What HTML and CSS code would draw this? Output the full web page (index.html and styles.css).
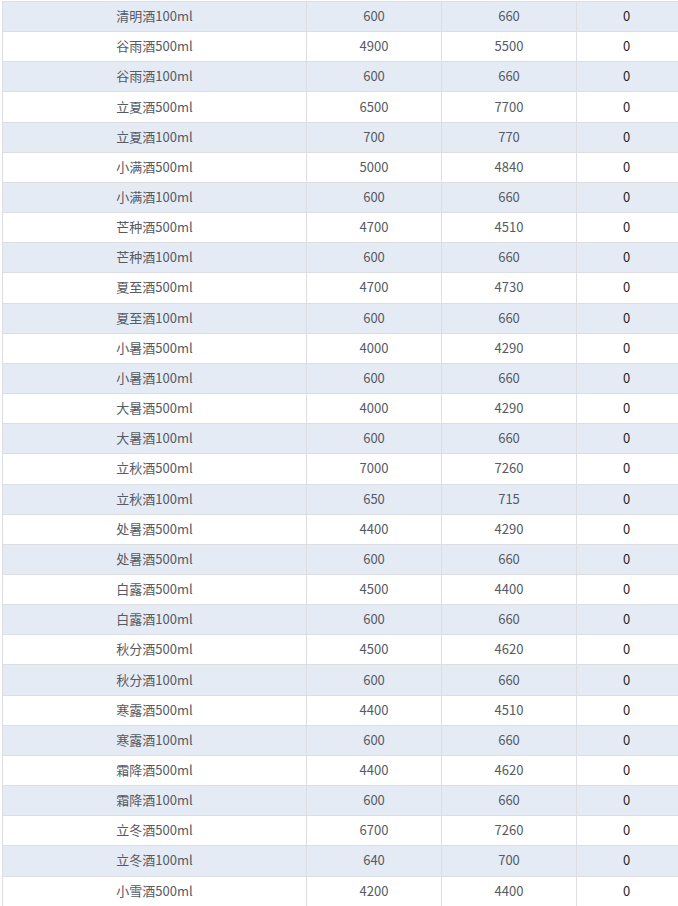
FILE: index.html
```html
<!DOCTYPE html>
<html lang="zh">
<head>
<meta charset="utf-8">
<link rel="stylesheet" href="styles.css">
</head>
<body>
<div class="frame">
<table class="grid">
<tbody>
<tr class="alt"><td class="name">清明酒100ml</td><td>600</td><td>660</td><td class="zero">0</td></tr>
<tr><td class="name">谷雨酒500ml</td><td>4900</td><td>5500</td><td class="zero">0</td></tr>
<tr class="alt"><td class="name">谷雨酒100ml</td><td>600</td><td>660</td><td class="zero">0</td></tr>
<tr><td class="name">立夏酒500ml</td><td>6500</td><td>7700</td><td class="zero">0</td></tr>
<tr class="alt"><td class="name">立夏酒100ml</td><td>700</td><td>770</td><td class="zero">0</td></tr>
<tr><td class="name">小满酒500ml</td><td>5000</td><td>4840</td><td class="zero">0</td></tr>
<tr class="alt"><td class="name">小满酒100ml</td><td>600</td><td>660</td><td class="zero">0</td></tr>
<tr><td class="name">芒种酒500ml</td><td>4700</td><td>4510</td><td class="zero">0</td></tr>
<tr class="alt"><td class="name">芒种酒100ml</td><td>600</td><td>660</td><td class="zero">0</td></tr>
<tr><td class="name">夏至酒500ml</td><td>4700</td><td>4730</td><td class="zero">0</td></tr>
<tr class="alt"><td class="name">夏至酒100ml</td><td>600</td><td>660</td><td class="zero">0</td></tr>
<tr><td class="name">小暑酒500ml</td><td>4000</td><td>4290</td><td class="zero">0</td></tr>
<tr class="alt"><td class="name">小暑酒100ml</td><td>600</td><td>660</td><td class="zero">0</td></tr>
<tr><td class="name">大暑酒500ml</td><td>4000</td><td>4290</td><td class="zero">0</td></tr>
<tr class="alt"><td class="name">大暑酒100ml</td><td>600</td><td>660</td><td class="zero">0</td></tr>
<tr><td class="name">立秋酒500ml</td><td>7000</td><td>7260</td><td class="zero">0</td></tr>
<tr class="alt"><td class="name">立秋酒100ml</td><td>650</td><td>715</td><td class="zero">0</td></tr>
<tr><td class="name">处暑酒500ml</td><td>4400</td><td>4290</td><td class="zero">0</td></tr>
<tr class="alt"><td class="name">处暑酒500ml</td><td>600</td><td>660</td><td class="zero">0</td></tr>
<tr><td class="name">白露酒500ml</td><td>4500</td><td>4400</td><td class="zero">0</td></tr>
<tr class="alt"><td class="name">白露酒100ml</td><td>600</td><td>660</td><td class="zero">0</td></tr>
<tr><td class="name">秋分酒500ml</td><td>4500</td><td>4620</td><td class="zero">0</td></tr>
<tr class="alt"><td class="name">秋分酒100ml</td><td>600</td><td>660</td><td class="zero">0</td></tr>
<tr><td class="name">寒露酒500ml</td><td>4400</td><td>4510</td><td class="zero">0</td></tr>
<tr class="alt"><td class="name">寒露酒100ml</td><td>600</td><td>660</td><td class="zero">0</td></tr>
<tr><td class="name">霜降酒500ml</td><td>4400</td><td>4620</td><td class="zero">0</td></tr>
<tr class="alt"><td class="name">霜降酒100ml</td><td>600</td><td>660</td><td class="zero">0</td></tr>
<tr><td class="name">立冬酒500ml</td><td>6700</td><td>7260</td><td class="zero">0</td></tr>
<tr class="alt"><td class="name">立冬酒100ml</td><td>640</td><td>700</td><td class="zero">0</td></tr>
<tr><td class="name">小雪酒500ml</td><td>4200</td><td>4400</td><td class="zero">0</td></tr>
</tbody>
</table>
</div>
</body>
</html>
```

FILE: styles.css
```css
html, body {
  margin: 0;
  padding: 0;
  background: #ffffff;
  overflow: hidden;
}

body {
  font-family: "Noto Sans CJK SC", "Noto Sans", sans-serif;
  font-size: 13px;
  color: #555a63;
}

.frame {
  width: 678px;
  height: 906px;
  overflow: hidden;
}

.grid {
  border-collapse: collapse;
  table-layout: fixed;
  width: 710px;
  margin: 1px 0 0 2px;
}

.grid td {
  border: 1px solid #dcdee3;
  text-align: center;
  padding: 0 0 1px 0;
  height: 28.16px;
  line-height: 18px;
  white-space: nowrap;
}

.grid td.name {
  width: 303px;
}

.grid td:nth-child(2),
.grid td:nth-child(3) {
  width: 134px;
}

.grid td.zero {
  color: #1f1f1f;
  padding-right: 35px;
}

.grid tr.alt td {
  background: #e5ebf5;
}
```
